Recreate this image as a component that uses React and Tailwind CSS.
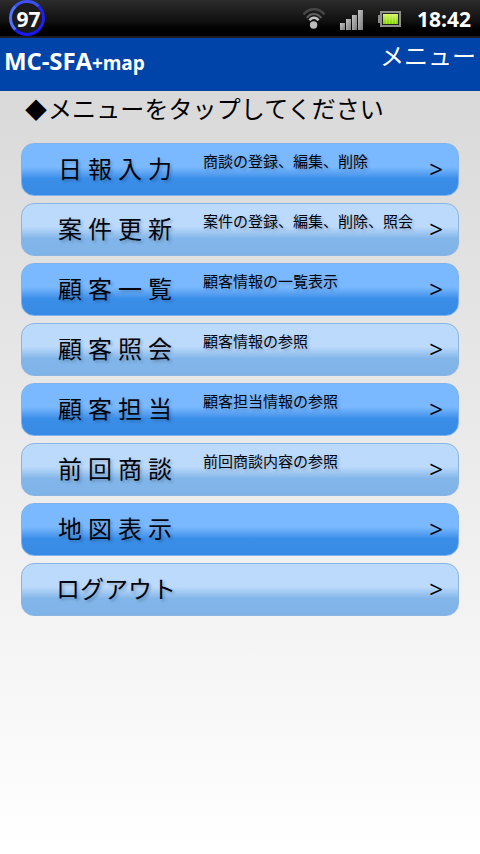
import React from "react";

// ----------------------------------------
// DATA
// ----------------------------------------

const MENU_ITEMS = [
  { label: "日報入力", description: "商談の登録、編集、削除" },
  { label: "案件更新", description: "案件の登録、編集、削除、照会" },
  { label: "顧客一覧", description: "顧客情報の一覧表示" },
  { label: "顧客照会", description: "顧客情報の参照" },
  { label: "顧客担当", description: "顧客担当情報の参照" },
  { label: "前回商談", description: "前回商談内容の参照" },
  { label: "地図表示", description: "" },
  { label: "ログアウト", description: "", tight: true },
];

// ----------------------------------------
// STATUS BAR
// ----------------------------------------

function WifiIcon() {
  return (
    <svg className="h-[22px] w-6" viewBox="0 0 24 22" fill="none">
      <path d="M1.5 7.6C7 0.4 17 0.4 22.5 7.6" stroke="#474747" strokeWidth="2.4" />
      <path d="M4.8 11C8.5 5.6 15.5 5.6 19.2 11" stroke="#5e5e5e" strokeWidth="2" />
      <path d="M7.5 13.4C9.8 9.8 14.2 9.8 16.5 13.4" stroke="#c4c4c4" strokeWidth="2.4" />
      <circle cx="11.6" cy="18" r="3.7" fill="#bdbdbd" />
    </svg>
  );
}

function SignalIcon() {
  return (
    <svg className="h-5 w-[23px]" viewBox="0 0 23 20">
      <defs>
        <linearGradient id="bar" x1="0" y1="0" x2="1" y2="1">
          <stop offset="0" stopColor="#c4c4c4" />
          <stop offset="1" stopColor="#7b7b7b" />
        </linearGradient>
      </defs>
      <rect x="0" y="13" width="5" height="7" fill="url(#bar)" />
      <rect x="6" y="9" width="5" height="11" fill="url(#bar)" />
      <rect x="12" y="5" width="5" height="15" fill="url(#bar)" />
      <rect x="18" y="0" width="5" height="20" fill="url(#bar)" />
    </svg>
  );
}

function BatteryIcon() {
  return (
    <svg className="h-4 w-[23px]" viewBox="0 0 23 16">
      <defs>
        <linearGradient id="charge" x1="0" y1="0" x2="0" y2="1">
          <stop offset="0" stopColor="#d9f56b" />
          <stop offset="1" stopColor="#7fd400" />
        </linearGradient>
      </defs>
      <rect x="0" y="4" width="3" height="8" fill="#8d8d8d" />
      <rect x="3" y="1" width="19" height="14" fill="#222" stroke="#8f8f8a" strokeWidth="2" />
      <rect x="5" y="3" width="15" height="10" fill="url(#charge)" />
      <path d="M8.5 3v10M11.5 3v10M14.5 3v10M17.5 3v10" stroke="#e6ff8c" strokeOpacity="0.35" />
    </svg>
  );
}

function StatusBar() {
  return (
    <div className="flex h-[38px] items-center border-b-2 border-[#1c1b22] bg-linear-to-b from-[#2c2c2c] via-[#101010] via-60% to-black pr-[9px] pl-[9px] text-white">
      <div className="flex size-9 items-center justify-center rounded-full border-3 border-t-[#3c50f5] border-r-[#2020f5] border-b-[#1a1af0] border-l-[#5270ff] bg-[#1b1b1b] pt-[3px] pl-[3px] text-[21px] font-bold">
        97
      </div>
      <div className="ml-auto flex items-center">
        <WifiIcon />
        <div className="ml-[14px] pt-[3px]">
          <SignalIcon />
        </div>
        <div className="ml-[15px] pt-[2px]">
          <BatteryIcon />
        </div>
        <span className="ml-4 pt-[3px] text-[21px] leading-none font-bold">18:42</span>
      </div>
    </div>
  );
}

// ----------------------------------------
// MENU
// ----------------------------------------

function MenuButton({ item, dark }) {
  return (
    <button
      className={`flex h-[53px] w-full items-start rounded-[13px] border px-px pt-px text-left text-[#00050f] [text-shadow:2px_2px_3px_rgba(0,0,0,0.22)] ${
        dark
          ? "border-[#7fb2ec] bg-linear-to-b from-[#7ab9ff] from-45% via-[#3a8ee8] via-68% to-[#388be5]"
          : "border-[#8ab4e2] bg-linear-to-b from-[#bbdafc] from-45% via-[#82b5e9] via-68% to-[#80b4e9]"
      }`}
    >
      <span
        className={`mt-[6px] w-[120px] shrink-0 text-[24px] leading-9 whitespace-nowrap ${
          item.tight ? "ml-[33px]" : "ml-[35px] tracking-[6px]"
        }`}
      >
        {item.label}
      </span>
      <span className="mt-[5px] ml-[25px] text-[15px] leading-[22px] whitespace-nowrap">
        {item.description}
      </span>
      <span className="mt-[9px] mr-[14px] ml-auto text-[24px] leading-[30px] [text-shadow:none]">
        &gt;
      </span>
    </button>
  );
}

export default function App() {
  return (
    <div className="flex h-[854px] w-[480px] flex-col overflow-hidden bg-white font-['Open_Sans','Noto_Sans_CJK_JP',sans-serif]">
      <StatusBar />

      <header className="flex h-[53px] items-start justify-between bg-[#0044aa] pr-[4px] pl-[4px] text-white">
        <h1 className="mt-[5px] text-[24px] leading-9 font-bold tracking-[-0.1px]">
          MC-SFA<span className="text-[19px]">+map</span>
        </h1>
        <span className="text-[24px] leading-9">メニュー</span>
      </header>

      <main className="flex-1 bg-linear-to-b from-[#d9d9d9] to-white px-[21px]">
        <p className="flex h-[52px] pl-[3px] text-[24px] leading-9 tracking-[0.1px] whitespace-nowrap text-black">
          <span className="w-6 text-center text-[22px]">◆</span>
          <span>メニューをタップしてください</span>
        </p>
        <nav className="flex flex-col gap-[7px]">
          {MENU_ITEMS.map((item, index) => (
            <MenuButton key={item.label} item={item} dark={index % 2 === 0} />
          ))}
        </nav>
      </main>
    </div>
  );
}
